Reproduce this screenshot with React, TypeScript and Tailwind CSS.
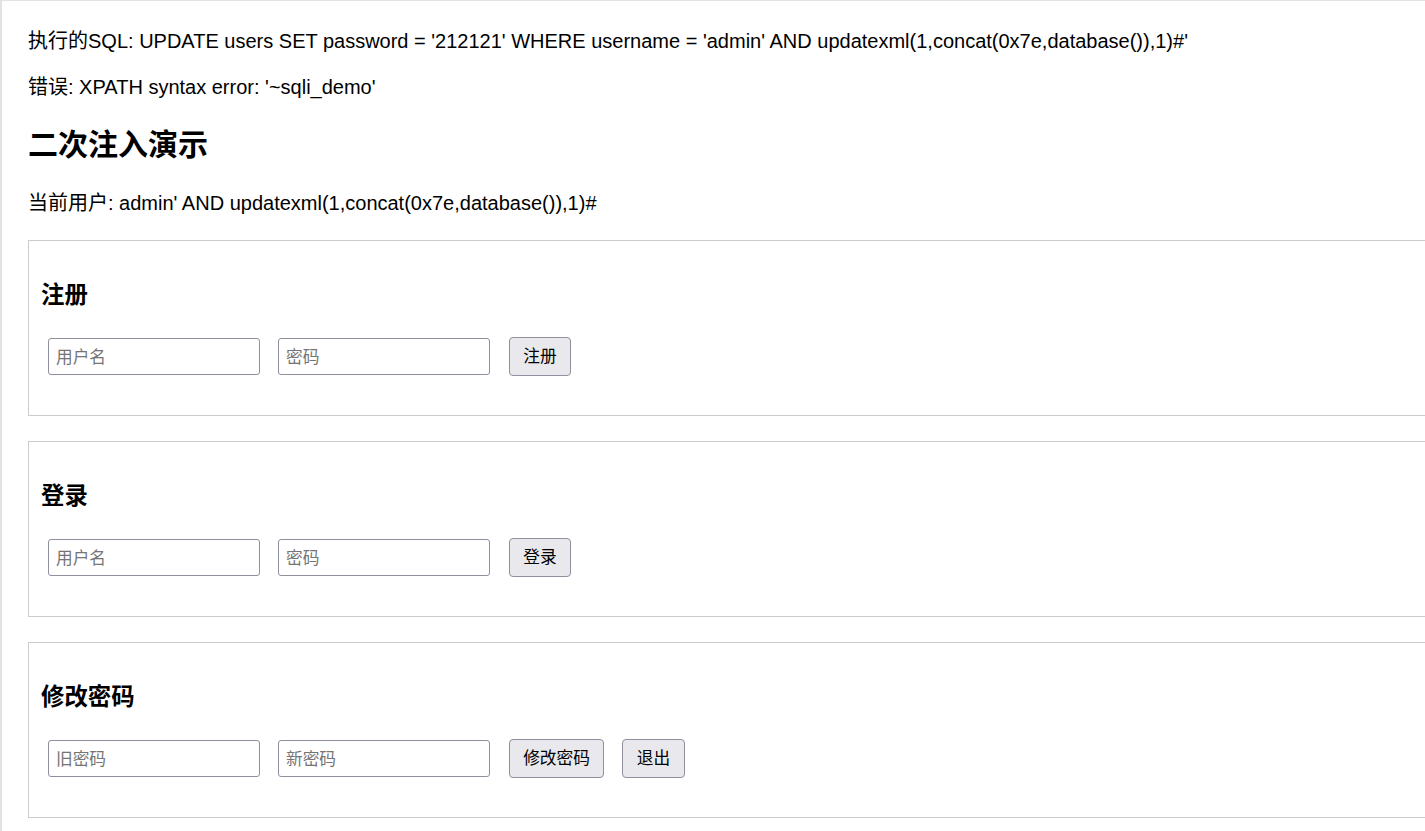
import { ReactNode } from 'react'

const font = "font-['Liberation_Sans','Noto_Sans_CJK_SC',sans-serif]"

function Field({ placeholder, first }: { placeholder: string; first?: boolean }) {
  return (
    <input
      type="text"
      placeholder={placeholder}
      className={`${first ? 'ml-[7px]' : 'ml-[18px]'} w-[212px] h-[37px] border border-[#8f8f9d] rounded-[3px] bg-white pl-[7px] pt-[2px] text-[16.7px] text-black placeholder:text-[#757575] outline-none ${font}`}
    />
  )
}

function Btn({ children, w, ml }: { children: ReactNode; w: string; ml: string }) {
  return (
    <button
      className={`${w} ${ml} h-[39px] border border-[#8f8f9d] rounded-[4px] bg-[#e9e9ed] text-[16.7px] text-black flex items-center justify-center pt-[1px] ${font}`}
    >
      {children}
    </button>
  )
}

function Box({ title, children, first }: { title: string; children: ReactNode; first?: boolean }) {
  return (
    <div className={`${first ? 'mt-[24px]' : 'mt-[25px]'} w-[1420px] border border-[#cccccc] pl-[12px] pt-[13px] pb-[39px]`}>
      <h3 className="mt-[25px] text-[23.4px] leading-[32px] font-bold">{title}</h3>
      <div className="mt-[26px] flex items-center">{children}</div>
    </div>
  )
}

export default function App() {
  return (
    <div className={`w-[1425px] h-[831px] overflow-hidden bg-white text-black border-t border-l-2 border-[#e2e2e2] pl-[26px] pt-[27px] ${font}`}>
      <p className="text-[20px] leading-[26px] whitespace-nowrap">
        执行的SQL: UPDATE users SET password = '212121' WHERE username = 'admin' AND updatexml(1,concat(0x7e,database()),1)#'
      </p>
      <p className="mt-[20px] text-[20px] leading-[26px]">错误: XPATH syntax error: '~sqli_demo'</p>
      <h2 className="mt-[25px] text-[30px] leading-[40px] font-bold">二次注入演示</h2>
      <p className="mt-[25px] text-[20px] leading-[26px]">
        当前用户: admin' AND updatexml(1,concat(0x7e,database()),1)#
      </p>

      <Box title="注册" first>
        <Field placeholder="用户名" first />
        <Field placeholder="密码" />
        <Btn w="w-[62px]" ml="ml-[19px]">注册</Btn>
      </Box>

      <Box title="登录">
        <Field placeholder="用户名" first />
        <Field placeholder="密码" />
        <Btn w="w-[62px]" ml="ml-[19px]">登录</Btn>
      </Box>

      <Box title="修改密码">
        <Field placeholder="旧密码" first />
        <Field placeholder="新密码" />
        <Btn w="w-[95px]" ml="ml-[19px]">修改密码</Btn>
        <Btn w="w-[63px]" ml="ml-[18px]">退出</Btn>
      </Box>
    </div>
  )
}
